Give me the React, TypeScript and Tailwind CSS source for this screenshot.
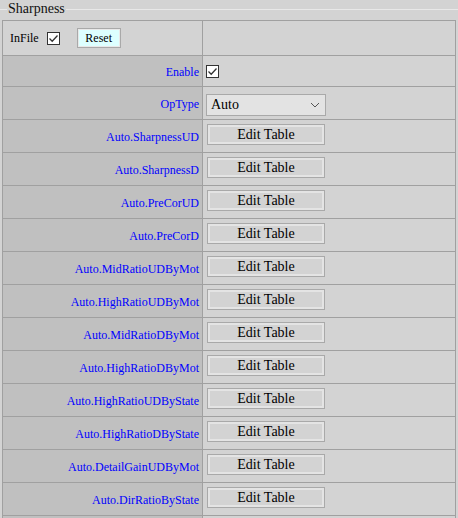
import React from "react";

function Check() {
  return (
    <span className="inline-flex h-[13px] w-[13px] items-center justify-center border border-[#333] bg-white">
      <svg width="11" height="11" viewBox="0 0 11 11">
        <path d="M1.5 5.5 L4.2 8.2 L9.5 2.5" fill="none" stroke="#333" strokeWidth="1.3" />
      </svg>
    </span>
  );
}

function EditBtn() {
  return (
    <div className="flex h-[21px] w-[118px] items-center justify-center border border-[#a9a9a9] bg-[#d3d3d3] text-[14px] leading-none text-black shadow-[inset_0_0_0_2px_#e4e4e4]">
      Edit Table
    </div>
  );
}

const labels = [
  "Auto.SharpnessUD",
  "Auto.SharpnessD",
  "Auto.PreCorUD",
  "Auto.PreCorD",
  "Auto.MidRatioUDByMot",
  "Auto.HighRatioUDByMot",
  "Auto.MidRatioDByMot",
  "Auto.HighRatioDByMot",
  "Auto.HighRatioUDByState",
  "Auto.HighRatioDByState",
  "Auto.DetailGainUDByMot",
  "Auto.DirRatioByState",
];

export default function App() {
  return (
    <div className="h-[518px] w-[458px] overflow-hidden bg-[#d3d3d3] font-['Liberation_Serif','Times_New_Roman',serif]">
      <div className="flex h-[20px] items-start">
        <div className="mt-[9px] h-px w-[7px] bg-[#e8e8e8]" />
        <div className="px-[1px] text-[14px] leading-[17px] text-[#111]">Sharpness</div>
        <div className="mt-[9px] h-px flex-1 bg-[#e8e8e8]" />
      </div>
      <div className="ml-[2px] w-[454px] border border-[#a0a0a0]">
        <div className="flex h-[35px] border-b border-[#a0a0a0]">
          <div className="flex w-[200px] items-center border-r border-[#a0a0a0] pl-[7px] text-[12px] text-black">
            <span>InFile</span>
            <span className="ml-[8px] flex">
              <Check />
            </span>
            <div className="ml-[17px] flex h-[20px] w-[44px] items-center justify-center border border-[#a9a9a9] bg-[#ddffff] shadow-[inset_0_0_0_1px_#e8e8e8]">
              Reset
            </div>
          </div>
          <div className="flex-1" />
        </div>
        <div className="flex h-[31px] border-b border-[#a0a0a0]">
          <div className="flex w-[200px] items-center justify-end border-r border-[#a0a0a0] bg-[#c0c0c0] pr-[3px] pt-[1px] text-[12px] text-[#0000ff]">
            Enable
          </div>
          <div className="flex flex-1 items-center pl-[3px] pt-[1px]">
            <Check />
          </div>
        </div>
        <div className="flex h-[33px] border-b border-[#a0a0a0]">
          <div className="flex w-[200px] items-center justify-end border-r border-[#a0a0a0] bg-[#c0c0c0] pr-[3px] pt-[2px] text-[12px] text-[#0000ff]">
            OpType
          </div>
          <div className="flex flex-1 items-center pl-[3px] pt-[3px]">
            <div className="flex h-[22px] w-[120px] items-center justify-between border border-[#a9a9a9] bg-[#e3e3e3] pl-[4px] pr-[5px] text-[14px] font-medium text-black">
              <span>Auto</span>
              <svg width="10" height="6" viewBox="0 0 10 6">
                <path d="M1 1 L5 5 L9 1" fill="none" stroke="#555" strokeWidth="1" />
              </svg>
            </div>
          </div>
        </div>
        {labels.map((l, i) => (
          <div key={i} className="flex h-[33px] border-b border-[#a0a0a0]">
            <div className="flex w-[200px] items-center justify-end border-r border-[#a0a0a0] bg-[#c0c0c0] pr-[3px] pt-[2px] text-[12px] text-[#0000ff]">
              {l}
            </div>
            <div className="flex flex-1 items-start pl-[4px] pt-[4px]">
              <EditBtn />
            </div>
          </div>
        ))}
        <div className="flex h-[33px] border-b border-[#a0a0a0]">
          <div className="w-[200px] border-r border-[#a0a0a0] bg-[#c0c0c0]" />
          <div className="flex-1" />
        </div>
      </div>
    </div>
  );
}
